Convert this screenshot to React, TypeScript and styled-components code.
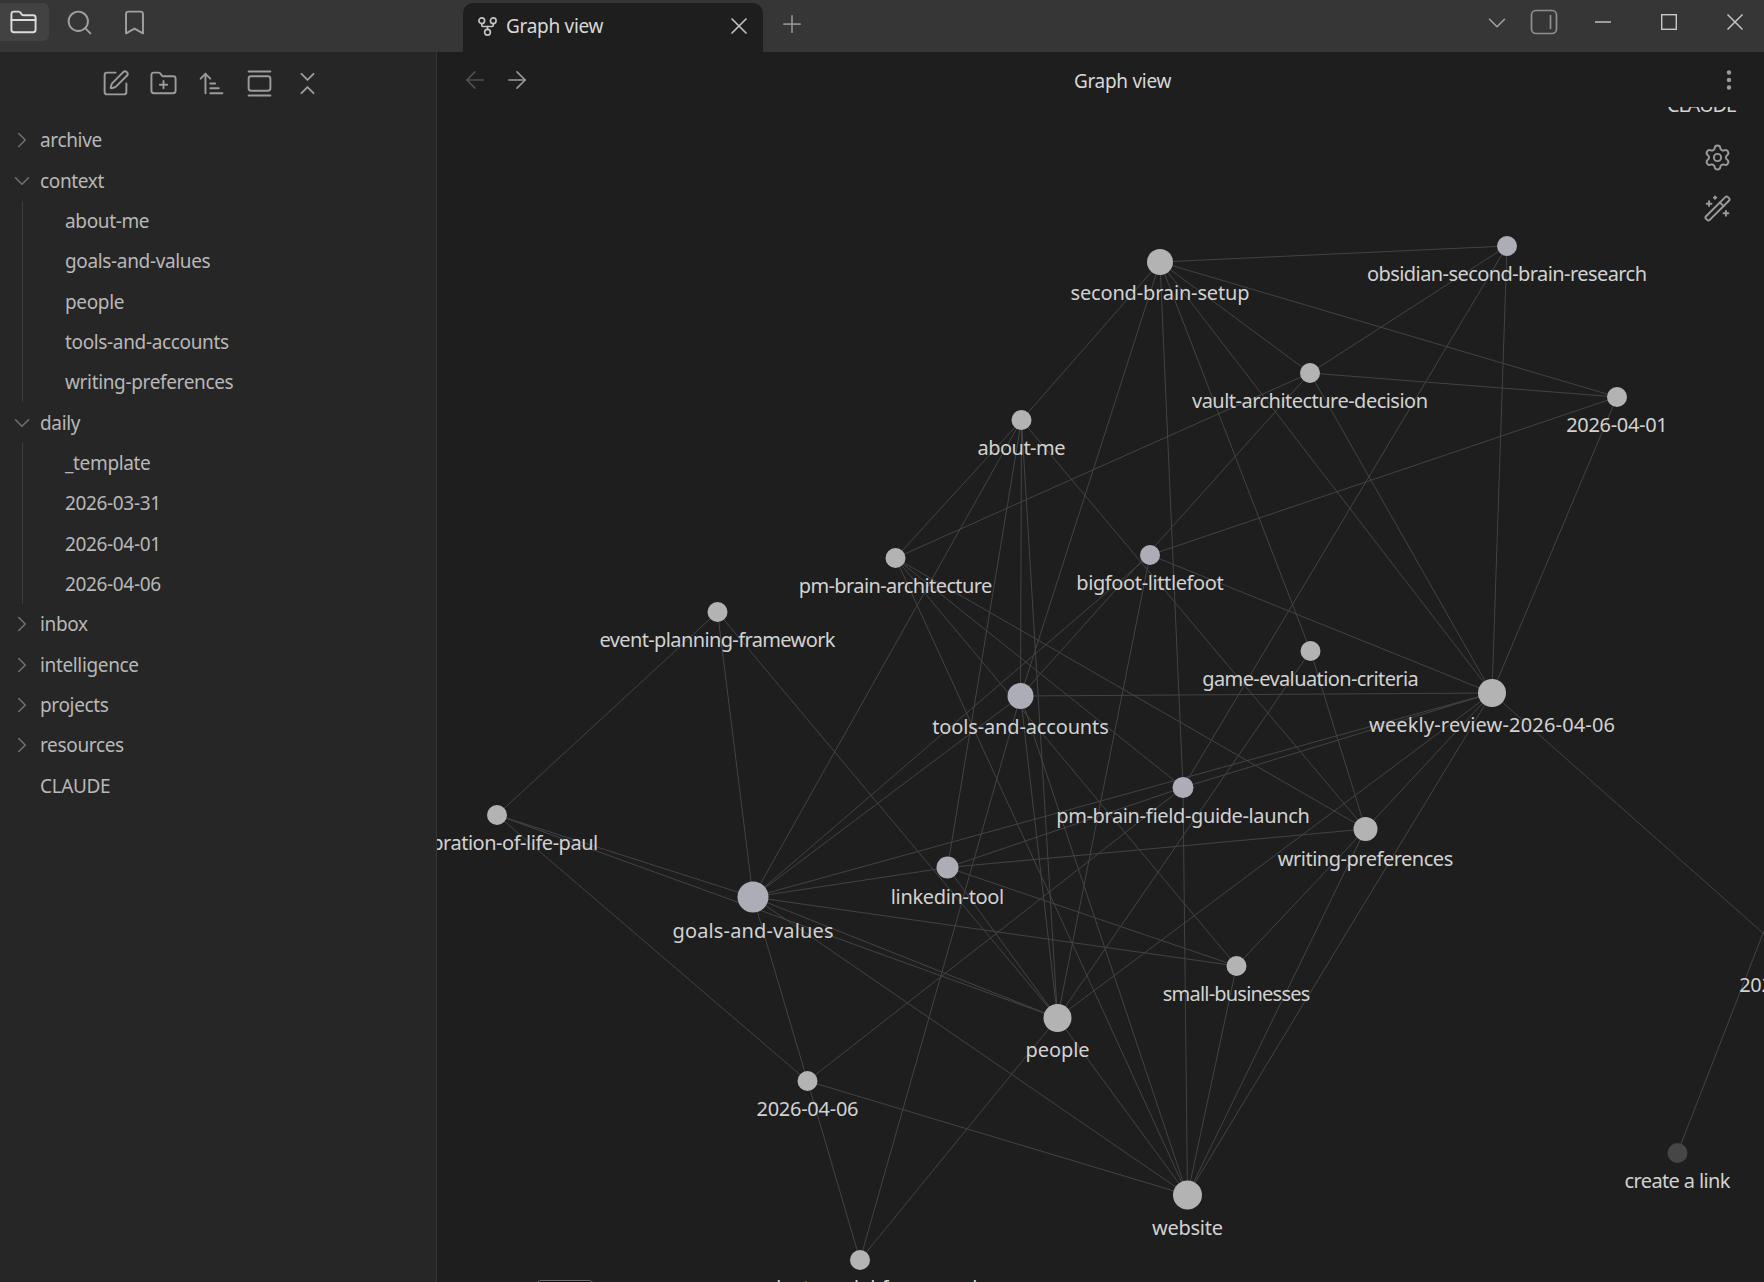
import styled, { createGlobalStyle } from 'styled-components';
import {
  ArrowLeft,
  ArrowRight,
  ArrowUpNarrowWide,
  Bookmark,
  ChevronDown,
  ChevronRight,
  ChevronsDownUp,
  EllipsisVertical,
  FolderClosed,
  FolderPlus,
  GalleryVertical,
  GitFork,
  Plus,
  Search,
  Settings,
  SquarePen,
  WandSparkles,
  X,
} from 'lucide-react';

type GraphNode = { id: string; x: number; y: number; r: number; label: string; w: number; tone?: 'blue' | 'dim' };

const nodes: GraphNode[] = [
  { id: 'S', x: 1160, y: 262, r: 13, label: 'second-brain-setup', w: 179 },
  { id: 'O', x: 1507, y: 246, r: 10, label: 'obsidian-second-brain-research', w: 280, tone: 'blue' },
  { id: 'V', x: 1310, y: 373, r: 10, label: 'vault-architecture-decision', w: 236 },
  { id: 'D1', x: 1617, y: 397, r: 10, label: '2026-04-01', w: 101.5 },
  { id: 'A', x: 1021.5, y: 420, r: 10, label: 'about-me', w: 88 },
  { id: 'P', x: 895.5, y: 558, r: 10, label: 'pm-brain-architecture', w: 193.5 },
  { id: 'B', x: 1150, y: 555, r: 10, label: 'bigfoot-littlefoot', w: 147.5, tone: 'blue' },
  { id: 'E', x: 717.5, y: 612, r: 10, label: 'event-planning-framework', w: 236 },
  { id: 'Gm', x: 1310.5, y: 651, r: 10, label: 'game-evaluation-criteria', w: 216.5 },
  { id: 'T', x: 1020.5, y: 696, r: 13, label: 'tools-and-accounts', w: 176.5, tone: 'blue' },
  { id: 'W', x: 1492, y: 693, r: 14, label: 'weekly-review-2026-04-06', w: 246 },
  { id: 'F', x: 1183, y: 787.5, r: 10.5, label: 'pm-brain-field-guide-launch', w: 253.5, tone: 'blue' },
  { id: 'Wr', x: 1365.5, y: 829, r: 12, label: 'writing-preferences', w: 175.5 },
  { id: 'C', x: 497, y: 815, r: 10, label: 'celebration-of-life-paul', w: 202.5 },
  { id: 'L', x: 947.5, y: 867.5, r: 11, label: 'linkedin-tool', w: 113.5, tone: 'blue' },
  { id: 'G', x: 753, y: 897, r: 15.5, label: 'goals-and-values', w: 161, tone: 'blue' },
  { id: 'Sm', x: 1236.5, y: 966, r: 10, label: 'small-businesses', w: 147.5 },
  { id: 'Pe', x: 1057.5, y: 1018, r: 14, label: 'people', w: 64 },
  { id: 'D6', x: 807.5, y: 1081, r: 10, label: '2026-04-06', w: 102 },
  { id: 'Web', x: 1187.5, y: 1195, r: 14.5, label: 'website', w: 71 },
  { id: 'Bt', x: 860, y: 1260, r: 10, label: 'product-model-framework', w: 246 },
  { id: 'Link', x: 1677.5, y: 1153, r: 10, label: 'create a link', w: 106, tone: 'dim' },
  { id: 'D3', x: 1790, y: 957, r: 10, label: '2026-03-31', w: 101.5 },
  { id: 'Cl', x: 1702, y: 77, r: 10, label: 'CLAUDE', w: 70 },
];

const edges: [string, string][] = [
  ['S', 'O'], ['S', 'D1'], ['S', 'V'], ['S', 'A'], ['S', 'T'], ['S', 'F'], ['S', 'Gm'], ['S', 'W'],
  ['V', 'O'], ['V', 'D1'], ['V', 'P'], ['V', 'T'], ['V', 'W'],
  ['O', 'F'], ['O', 'W'], ['D1', 'W'], ['D1', 'B'],
  ['A', 'P'], ['A', 'G'], ['A', 'L'], ['A', 'T'], ['A', 'Pe'], ['A', 'Wr'],
  ['P', 'Web'], ['P', 'Sm'], ['P', 'F'], ['P', 'Wr'],
  ['E', 'C'], ['E', 'G'], ['E', 'Pe'],
  ['C', 'G'], ['C', 'Pe'], ['C', 'D6'],
  ['G', 'B'], ['G', 'T'], ['G', 'W'], ['G', 'L'], ['G', 'Sm'], ['G', 'Pe'], ['G', 'D6'], ['G', 'Web'],
  ['L', 'F'], ['L', 'Wr'], ['L', 'Sm'], ['L', 'Pe'],
  ['B', 'W'], ['B', 'Pe'],
  ['T', 'W'], ['T', 'Bt'], ['T', 'Pe'], ['T', 'Web'],
  ['F', 'W'], ['F', 'Web'], ['F', 'D6'],
  ['Gm', 'Wr'], ['Gm', 'Pe'],
  ['W', 'Wr'], ['W', 'Pe'], ['W', 'Web'], ['W', 'D3'],
  ['Wr', 'Web'], ['Wr', 'Sm'], ['Sm', 'Web'],
  ['Pe', 'Web'], ['Pe', 'Bt'], ['D6', 'Web'], ['D6', 'Bt'],
];

const nodeById = (id: string) => nodes.find((n) => n.id === id) as GraphNode;

const GlobalStyle = createGlobalStyle`
  html, body {
    margin: 0;
    height: 100%;
    overflow: hidden;
    background: #1e1e1e;
    font-family: "Noto Sans", "Open Sans", sans-serif;
  }
  #root {
    height: 100%;
  }
`;

export default function App() {
  return (
    <>
      <GlobalStyle />
      <Shell>
        <TitleBar>
          <Ribbon>
            <RibbonButton $active>
              <FolderClosed size={29} strokeWidth={1.6} />
            </RibbonButton>
            <RibbonButton>
              <Search size={29} strokeWidth={1.6} />
            </RibbonButton>
            <RibbonButton>
              <Bookmark size={29} strokeWidth={1.6} />
            </RibbonButton>
          </Ribbon>
          <Tab>
            <GitFork size={23} strokeWidth={1.7} color="#c4c4c4" />
            <TabTitle>Graph view</TabTitle>
            <TabClose>
              <X size={28} strokeWidth={1.5} />
            </TabClose>
          </Tab>
          <NewTab>
            <Plus size={28} strokeWidth={1.5} />
          </NewTab>
          <WindowControls>
            <ChevronSlot>
              <ChevronDown size={30} strokeWidth={1.3} />
            </ChevronSlot>
            <PanelToggle>
              <svg width="28" height="26" viewBox="0 0 28 26" fill="none" stroke="currentColor" strokeWidth="1.7">
                <rect x="1.5" y="1.5" width="25" height="23" rx="4.5" />
                <line x1="20.5" y1="6" x2="20.5" y2="20" />
              </svg>
            </PanelToggle>
            <WindowButton>
              <svg width="16" height="16" viewBox="0 0 16 16" stroke="currentColor" strokeWidth="1.4">
                <line x1="0" y1="8" x2="16" y2="8" />
              </svg>
            </WindowButton>
            <WindowButton>
              <svg width="16" height="16" viewBox="0 0 16 16" fill="none" stroke="currentColor" strokeWidth="1.4">
                <rect x="0.7" y="0.7" width="14.6" height="14.6" />
              </svg>
            </WindowButton>
            <WindowButton>
              <svg width="16" height="16" viewBox="0 0 16 16" stroke="currentColor" strokeWidth="1.4">
                <line x1="0.5" y1="0.5" x2="15.5" y2="15.5" />
                <line x1="15.5" y1="0.5" x2="0.5" y2="15.5" />
              </svg>
            </WindowButton>
          </WindowControls>
        </TitleBar>
        <Body>
          <Sidebar>
            <NavActions>
              <SquarePen size={29} strokeWidth={1.6} />
              <FolderPlus size={29} strokeWidth={1.6} />
              <ArrowUpNarrowWide size={29} strokeWidth={1.6} />
              <GalleryVertical size={29} strokeWidth={1.6} />
              <ChevronsDownUp size={29} strokeWidth={1.6} />
            </NavActions>
            <Tree>
              <Folder name="archive" />
              <Folder name="context" open>
                <FileRow>about-me</FileRow>
                <FileRow>goals-and-values</FileRow>
                <FileRow>people</FileRow>
                <FileRow>tools-and-accounts</FileRow>
                <FileRow>writing-preferences</FileRow>
              </Folder>
              <Folder name="daily" open>
                <FileRow>_template</FileRow>
                <FileRow>2026-03-31</FileRow>
                <FileRow>2026-04-01</FileRow>
                <FileRow>2026-04-06</FileRow>
              </Folder>
              <Folder name="inbox" />
              <Folder name="intelligence" />
              <Folder name="projects" />
              <Folder name="resources" />
              <RootFile>CLAUDE</RootFile>
            </Tree>
          </Sidebar>
          <Main>
            <ViewHeader>
              <NavArrows>
                <ArrowLeft size={28} strokeWidth={1.4} color="#505050" />
                <ArrowRight size={28} strokeWidth={1.4} color="#9a9a9a" />
              </NavArrows>
              <ViewTitle>Graph view</ViewTitle>
              <MoreButton>
                <EllipsisVertical size={26} strokeWidth={2.1} />
              </MoreButton>
            </ViewHeader>
            <Canvas>
              <GraphSvg viewBox="437 107 1327 1175" preserveAspectRatio="none">
                {edges.map(([a, b]) => {
                  const from = nodeById(a);
                  const to = nodeById(b);
                  return <Edge key={a + b} x1={from.x} y1={from.y} x2={to.x} y2={to.y} />;
                })}
                <Edge x1={1677.5} y1={1153} x2={1790} y2={864} />
                {nodes.map((n) => (
                  <NodeDot key={n.id} cx={n.x} cy={n.y} r={n.r} $tone={n.tone} />
                ))}
                {nodes.map((n) => (
                  <NodeLabel key={n.id} x={n.x} y={n.y + n.r + 25} textLength={n.w}>
                    {n.label}
                  </NodeLabel>
                ))}
              </GraphSvg>
              <GraphControls>
                <Settings size={29} strokeWidth={1.6} />
                <WandSparkles size={29} strokeWidth={1.6} />
              </GraphControls>
              <CutOffKey />
            </Canvas>
          </Main>
        </Body>
      </Shell>
    </>
  );
}

function Folder({ name, open, children }: { name: string; open?: boolean; children?: React.ReactNode }) {
  return (
    <>
      <FolderRow>
        <Caret>{open ? <ChevronDown size={26} strokeWidth={1.5} /> : <ChevronRight size={26} strokeWidth={1.5} />}</Caret>
        {name}
      </FolderRow>
      {open && <FolderChildren>{children}</FolderChildren>}
    </>
  );
}

const Shell = styled.div`
  display: flex;
  flex-direction: column;
  height: 100%;
`;

const TitleBar = styled.header`
  display: flex;
  align-items: flex-start;
  height: 52px;
  flex: none;
  background: #363636;
  color: #a0a0a0;
`;

const Ribbon = styled.div`
  display: flex;
  gap: 6px;
  width: 463px;
  padding-top: 3px;
  flex: none;
`;

const RibbonButton = styled.div<{ $active?: boolean }>`
  display: flex;
  align-items: center;
  justify-content: center;
  width: 49px;
  height: 38px;
  box-sizing: border-box;
  padding-right: ${(p) => (p.$active ? '3px' : '0')};
  border-radius: ${(p) => (p.$active ? '0 6px 6px 0' : '6px')};
  background: ${(p) => (p.$active ? '#424242' : 'transparent')};
  color: ${(p) => (p.$active ? '#dcdcdc' : '#a0a0a0')};
`;

const Tab = styled.div`
  display: flex;
  align-items: center;
  width: 300px;
  height: 49px;
  margin-top: 3px;
  padding: 0 10px 3px 13px;
  box-sizing: border-box;
  flex: none;
  background: #1e1e1e;
  border-radius: 10px 10px 0 0;
`;

const TabTitle = styled.span`
  flex: 1;
  margin-left: 7px;
  font-size: 19px;
  letter-spacing: -0.3px;
  color: #d8d8d8;
`;

const TabClose = styled.div`
  display: flex;
  color: #bdbdbd;
`;

const NewTab = styled.div`
  display: flex;
  margin: 10px 0 0 15px;
  color: #8e8e8e;
`;

const WindowControls = styled.div`
  display: flex;
  align-items: center;
  height: 44px;
  margin-left: auto;
  padding-right: 17px;
`;

const ChevronSlot = styled.div`
  display: flex;
  margin: 2px 18px 0 0;
  color: #a0a0a0;
`;

const PanelToggle = styled.div`
  display: flex;
  margin-right: 33px;
  color: #8f8f8f;
`;

const WindowButton = styled.div`
  display: flex;
  justify-content: center;
  width: 24px;
  color: #c8c8c8;
  & + & {
    margin-left: 42px;
  }
`;

const Body = styled.div`
  display: flex;
  flex: 1;
  min-height: 0;
`;

const Sidebar = styled.aside`
  width: 436px;
  flex: none;
  background: #262626;
  border-right: 1px solid #363636;
`;

const NavActions = styled.div`
  display: flex;
  justify-content: center;
  gap: 19px;
  height: 62px;
  padding-right: 14px;
  align-items: center;
  color: #9c9c9c;
`;

const Tree = styled.div`
  display: flex;
  flex-direction: column;
  padding-top: 6px;
  font-size: 19px;
  letter-spacing: -0.35px;
  color: #b8b8b8;
`;

const FolderRow = styled.div`
  display: flex;
  align-items: center;
  height: 40.35px;
  padding-left: 9px;
`;

const Caret = styled.span`
  display: flex;
  width: 31px;
  color: #6f6f6f;
`;

const FolderChildren = styled.div`
  margin-left: 22px;
  border-left: 1px solid #3c3c3c;
`;

const FileRow = styled.div`
  display: flex;
  align-items: center;
  height: 40.35px;
  padding-left: 42px;
`;

const RootFile = styled.div`
  display: flex;
  align-items: center;
  height: 40.35px;
  padding-left: 40px;
`;

const Main = styled.main`
  display: flex;
  flex-direction: column;
  flex: 1;
  min-width: 0;
  background: #1e1e1e;
`;

const ViewHeader = styled.div`
  display: grid;
  grid-template-columns: 1fr auto 1fr;
  align-items: center;
  height: 55px;
  flex: none;
  padding: 0 22px 0 24px;
`;

const NavArrows = styled.div`
  display: flex;
  gap: 14px;
`;

const ViewTitle = styled.div`
  margin-left: 42px;
  padding-top: 2px;
  font-size: 19px;
  letter-spacing: -0.3px;
  color: #d8d8d8;
`;

const MoreButton = styled.div`
  display: flex;
  justify-content: flex-end;
  color: #9a9a9a;
`;

const Canvas = styled.div`
  position: relative;
  flex: 1;
  min-height: 0;
  overflow: hidden;
`;

const GraphSvg = styled.svg`
  display: block;
  width: 100%;
  height: 100%;
`;

const Edge = styled.line`
  stroke: #434343;
  stroke-width: 1;
`;

const NodeDot = styled.circle<{ $tone?: 'blue' | 'dim' }>`
  fill: ${(p) => (p.$tone === 'blue' ? '#adadb8' : p.$tone === 'dim' ? '#464646' : '#b3b3b3')};
`;

const NodeLabel = styled.text`
  fill: #d2d2d2;
  font-family: "Noto Sans", "Open Sans", sans-serif;
  font-size: 20px;
  text-anchor: middle;
`;

const GraphControls = styled.div`
  position: absolute;
  top: 36px;
  right: 32px;
  display: flex;
  flex-direction: column;
  gap: 22px;
  color: #9a9a9a;
`;

const CutOffKey = styled.div`
  position: absolute;
  left: 99px;
  bottom: -20px;
  width: 58px;
  height: 22px;
  box-sizing: border-box;
  border: 1px solid #6a6a6a;
  border-radius: 5px;
  background: #0c0c0c;
`;
